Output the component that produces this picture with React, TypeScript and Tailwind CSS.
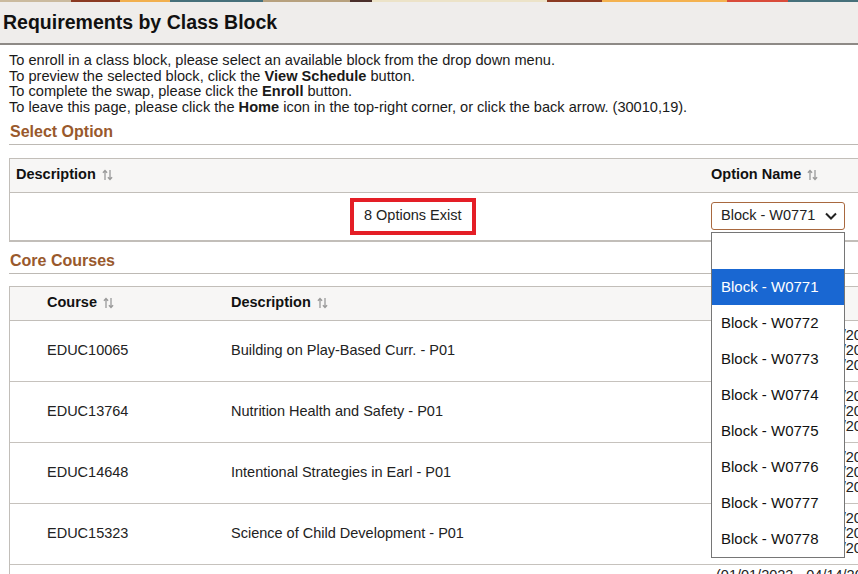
import React from "react";

const font = "font-['Liberation_Sans',Arial,sans-serif]";

const options = ["W0771", "W0772", "W0773", "W0774", "W0775", "W0776", "W0777", "W0778"];

const courses = [
  { code: "EDUC10065", desc: "Building on Play-Based Curr. - P01" },
  { code: "EDUC13764", desc: "Nutrition Health and Safety - P01" },
  { code: "EDUC14648", desc: "Intentional Strategies in Earl - P01" },
  { code: "EDUC15323", desc: "Science of Child Development - P01" },
];

const dates = ["01/09/2023 - 04/14/2023", "01/09/2023 - 04/14/2023", "01/09/2023 - 04/14/2023"];

function SortIcon() {
  return (
    <svg width="11" height="12" viewBox="0 0 11 12" fill="none" stroke="#9a9a9a" strokeWidth="1.3" className="ml-[6px]">
      <path d="M3 11V1.5M0.9 3.7L3 1.5l2.1 2.2" />
      <path d="M8 1v9.5M5.9 8.3L8 10.5l2.1-2.2" />
    </svg>
  );
}

function SectionTitle({ children, className = "" }: { children: React.ReactNode; className?: string }) {
  return (
    <div
      className={`ml-[9px] border-b border-[#bdb9b4] pb-[3px] pl-[1px] text-[16px] font-bold leading-[18px] text-[#99592c] ${className}`}
    >
      {children}
    </div>
  );
}

export default function App() {
  return (
    <div className={`relative h-[574px] w-[858px] overflow-hidden bg-white text-[14.5px] text-[#222] ${font}`}>
      {/* page banner */}
      <div className="h-[45px] border-b-2 border-[#8e8a86] bg-[#efedeb]">
        <div className="h-[2px] bg-[linear-gradient(to_right,#cbbb9f_0,#cbbb9f_71px,#8b3a22_71px,#8b3a22_120px,#f2b04f_120px,#f2b04f_170px,#46707a_170px,#46707a_263px,#b7a17e_263px,#b7a17e_350px,#4a2e2a_350px,#4a2e2a_372px,#ece3c8_372px,#ece3c8_547px,#8b3a22_547px,#8b3a22_602px,#f4b24f_602px,#f4b24f_727px,#d94b3a_727px,#d94b3a_788px,#46707a_788px)]" />
        <h1 className="pl-[3px] pt-[8px] text-[19.5px] font-bold leading-[24px] text-[#111]">
          Requirements by Class Block
        </h1>
      </div>

      {/* instructions */}
      <div className="mt-[8px] pl-[9px] text-[14.6px] leading-[15.7px] text-[#1a1a1a]">
        <p>To enroll in a class block, please select an available block from the drop down menu.</p>
        <p>
          To preview the selected block, click the <b>View Schedule</b> button.
        </p>
        <p>
          To complete the swap, please click the <b>Enroll</b> button.
        </p>
        <p>
          To leave this page, please click the <b>Home</b> icon in the top-right corner, or click the back arrow. (30010,19).
        </p>
      </div>

      <SectionTitle className="mt-[7px]">Select Option</SectionTitle>

      {/* option table */}
      <div className="ml-[9px] mt-[13px] w-[1000px] border border-b-2 border-[#c2beb9]">
        <div className="flex h-[34px] items-center border-b border-[#c2beb9] bg-[#f7f6f5] font-bold text-[#111]">
          <div className="flex w-[701px] items-center pl-[6px]">
            Description
            <SortIcon />
          </div>
          <div className="flex items-center">
            Option Name
            <SortIcon />
          </div>
        </div>
        <div className="flex h-[47px] items-center">
          <div className="w-[701px]">
            <div className="ml-[340px] inline-flex h-[37px] items-center border-4 border-[#e41e26] px-[10px] text-[#222]">
              8 Options Exist
            </div>
          </div>
          <div className="relative">
            <div className="flex h-[28px] w-[134px] items-center justify-between rounded-[3px] border border-[#a8683f] bg-white pl-[9px] pr-[7px] text-[14.5px] text-[#222]">
              Block - W0771
              <svg width="12" height="8" viewBox="0 0 12 8" fill="none" stroke="#222" strokeWidth="2">
                <path d="M1 1.5l5 5 5-5" />
              </svg>
            </div>
            <div className="absolute left-0 top-[30px] z-10 w-[134px] border border-[#767676] bg-white text-[15px] text-[#111]">
              <div className="h-[36px]" />
              {options.map((o, i) => (
                <div
                  key={o}
                  className={`flex h-[36px] items-center pl-[9px] ${i === 0 ? "bg-[#1967d2] text-white" : ""}`}
                >
                  Block - {o}
                </div>
              ))}
            </div>
          </div>
        </div>
      </div>

      <SectionTitle className="mt-[10px]">Core Courses</SectionTitle>

      {/* courses table */}
      <div className="ml-[9px] mt-[12px] w-[1000px] border-l border-t border-[#c2beb9]">
        <div className="flex h-[34px] items-center border-b border-[#c2beb9] bg-[#f7f6f5] font-bold text-[#111]">
          <div className="flex w-[221px] items-center pl-[37px]">
            Course
            <SortIcon />
          </div>
          <div className="flex w-[484px] items-center">
            Description
            <SortIcon />
          </div>
          <div className="flex items-center pl-[9px]">
            Dates
            <SortIcon />
          </div>
        </div>
        {courses.map((c) => (
          <div key={c.code} className="flex h-[61px] items-center border-b border-[#c6c2bd]">
            <div className="w-[221px] pl-[37px]">{c.code}</div>
            <div className="w-[484px]">{c.desc}</div>
            <div className="pl-[5px] leading-[15px]">
              {dates.map((d, i) => (
                <div key={i}>{d}</div>
              ))}
            </div>
          </div>
        ))}
        <div className="flex h-[60px] items-start pt-[3px]">
          <div className="w-[221px] pl-[37px]" />
          <div className="w-[484px]" />
          <div className="pl-[1px] leading-[15px]">(01/01/2023 - 04/14/2023)</div>
        </div>
      </div>
    </div>
  );
}
